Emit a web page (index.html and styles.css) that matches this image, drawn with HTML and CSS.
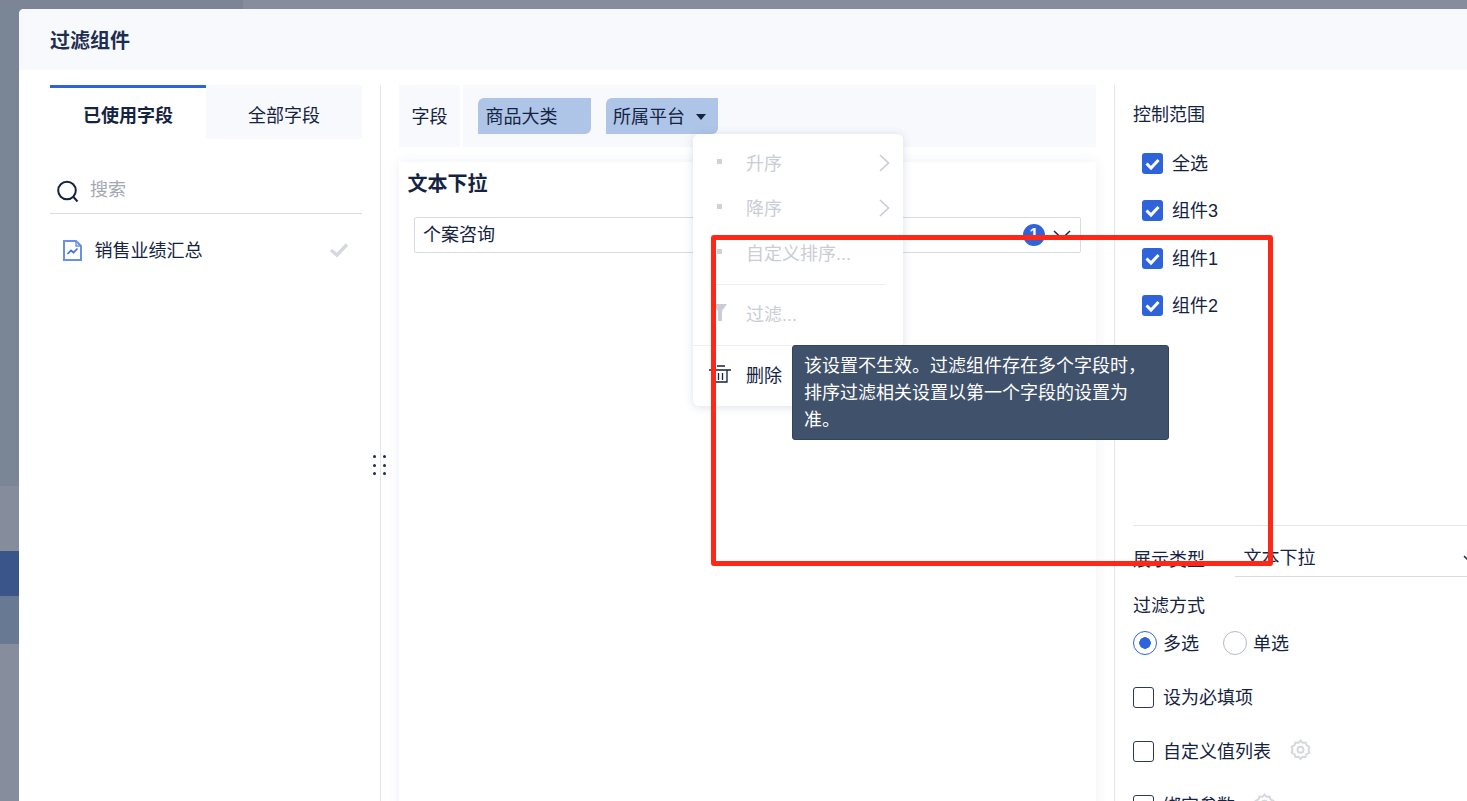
FILE: index.html
```html
<!DOCTYPE html>
<html lang="zh">
<head>
<meta charset="utf-8">
<title>过滤组件</title>
<link rel="stylesheet" href="styles.css">
</head>
<body>
<div class="page">
  <div class="top-strip"><div class="top-dark"></div></div>
  <div class="row">
    <div class="side-strip">
      <div class="seg seg-a"></div>
      <div class="seg seg-b"></div>
      <div class="seg seg-c"></div>
      <div class="seg seg-d"></div>
    </div>
    <div class="modal">
      <div class="modal-head">过滤组件</div>
      <div class="modal-body">
        <section class="left">
          <div class="tabs">
            <div class="tab tab-on">已使用字段</div>
            <div class="tab">全部字段</div>
          </div>
          <div class="search">
            <svg class="search-icon" width="22" height="23" viewBox="0 0 22 23"><circle cx="10" cy="10.5" r="8.8" fill="none" stroke="#14233f" stroke-width="2"/><path d="M16.5 17l4 4.5" stroke="#14233f" stroke-width="2" fill="none"/></svg>
            <span class="search-text">搜索</span>
          </div>
          <div class="ds-item">
            <svg class="ds-icon" width="19" height="21" viewBox="0 0 19 21"><path d="M1 1h12l5 5v14H1z" fill="#fff" stroke="#6a90e6" stroke-width="2"/><path d="M13 1v5h5" fill="none" stroke="#6a90e6" stroke-width="1.4"/><path d="M4.5 14l3.500-3.500 2.500 2 4-4" fill="none" stroke="#3f6fdc" stroke-width="1.700"/></svg>
            <span class="ds-name">销售业绩汇总</span>
            <svg class="ds-check" width="20" height="16" viewBox="0 0 20 16"><path d="M2 8l6 5L18 2.500" fill="none" stroke="#d5d8df" stroke-width="3.500"/></svg>
          </div>
        </section>
        <div class="splitter">
          <div class="grip"><i></i><i></i><i></i><i></i><i></i><i></i></div>
        </div>
        <section class="middle">
          <div class="field-bar">
            <div class="field-label">字段</div>
            <div class="pills">
              <div class="pill pill-first">商品大类</div>
              <div class="pill pill-second">所属平台<span class="caret"></span></div>
            </div>
          </div>
          <div class="card">
            <div class="card-title">文本下拉</div>
            <div class="select">
              <span class="select-text">个案咨询</span>
              <span class="badge">1</span>
              <svg class="select-chev" width="18" height="10" viewBox="0 0 18 10"><path d="M1 1l8 7.500L17 1" fill="none" stroke="#14233f" stroke-width="1.500"/></svg>
            </div>
          </div>
        </section>
        <div class="divider"></div>
        <section class="right">
          <div class="label">控制范围</div>
          <div class="checks">
            <div class="check-row"><svg class="cb" width="21" height="21" viewBox="0 0 21 21"><rect width="21" height="21" rx="3" fill="#2e63d9"/><path d="M4.500 10.500l4.500 4.500 7.500-8" fill="none" stroke="#fff" stroke-width="3"/></svg><span class="cb-text">全选</span></div>
            <div class="check-row"><svg class="cb" width="21" height="21" viewBox="0 0 21 21"><rect width="21" height="21" rx="3" fill="#2e63d9"/><path d="M4.500 10.500l4.500 4.500 7.500-8" fill="none" stroke="#fff" stroke-width="3"/></svg><span class="cb-text">组件3</span></div>
            <div class="check-row"><svg class="cb" width="21" height="21" viewBox="0 0 21 21"><rect width="21" height="21" rx="3" fill="#2e63d9"/><path d="M4.500 10.500l4.500 4.500 7.500-8" fill="none" stroke="#fff" stroke-width="3"/></svg><span class="cb-text">组件1</span></div>
            <div class="check-row"><svg class="cb" width="21" height="21" viewBox="0 0 21 21"><rect width="21" height="21" rx="3" fill="#2e63d9"/><path d="M4.500 10.500l4.500 4.500 7.500-8" fill="none" stroke="#fff" stroke-width="3"/></svg><span class="cb-text">组件2</span></div>
          </div>
          <div class="rule"></div>
          <div class="type-row">
            <span class="type-label">展示类型</span>
            <div class="type-select">文本下拉<svg class="type-chev" width="12" height="8" viewBox="0 0 12 8"><path d="M1 1l5 5 5-5" fill="none" stroke="#14233f" stroke-width="1.500"/></svg></div>
          </div>
          <div class="label filter-label">过滤方式</div>
          <div class="radios">
            <span class="radio radio-on"></span><span class="radio-text">多选</span>
            <span class="radio"></span><span class="radio-text">单选</span>
          </div>
          <div class="opt opt-1"><span class="box"></span><span class="opt-text">设为必填项</span></div>
          <div class="opt opt-2"><span class="box"></span><span class="opt-text">自定义值列表</span>
            <svg class="gear" width="21" height="22" viewBox="0 0 21 22"><path d="M10.500 1.500l2 2.300 3-.2 1.100 2.800 2.700 1.400-.7 3 .7 3-2.700 1.400-1.100 2.800-3-.2-2 2.300-2-2.300-3 .2-1.100-2.800L1.700 13.800l.7-3-.7-3 2.700-1.400 1.100-2.800 3 .2z" fill="none" stroke="#d5d8df" stroke-width="2"/><circle cx="10.500" cy="10.800" r="3" fill="none" stroke="#d5d8df" stroke-width="2"/></svg>
          </div>
          <div class="opt opt-3"><span class="box"></span><span class="opt-text">绑定参数</span>
            <svg class="gear" width="21" height="22" viewBox="0 0 21 22"><path d="M10.500 1.500l2 2.300 3-.2 1.100 2.800 2.700 1.400-.7 3 .7 3-2.700 1.400-1.100 2.800-3-.2-2 2.300-2-2.300-3 .2-1.100-2.800L1.700 13.800l.7-3-.7-3 2.700-1.400 1.100-2.800 3 .2z" fill="none" stroke="#d5d8df" stroke-width="2"/><circle cx="10.500" cy="10.800" r="3" fill="none" stroke="#d5d8df" stroke-width="2"/></svg>
          </div>
        </section>
      </div>
    </div>
  </div>

  <div class="menu">
    <div class="mi mi-off"><span class="mi-ico"><i class="dot"></i></span><span class="mi-text">升序</span><svg class="mi-arrow" width="11" height="18" viewBox="0 0 11 18"><path d="M1 1l8.500 8L1 17" fill="none" stroke="#c9cdd5" stroke-width="1.700"/></svg></div>
    <div class="mi mi-off"><span class="mi-ico"><i class="dot"></i></span><span class="mi-text">降序</span><svg class="mi-arrow" width="11" height="18" viewBox="0 0 11 18"><path d="M1 1l8.500 8L1 17" fill="none" stroke="#c9cdd5" stroke-width="1.700"/></svg></div>
    <div class="mi mi-off"><span class="mi-ico"><i class="dot"></i></span><span class="mi-text">自定义排序...</span></div>
    <div class="mi-sep mi-sep-short"></div>
    <div class="mi mi-off"><span class="mi-ico"><svg width="14" height="17" viewBox="0 0 14 17"><path d="M0 0h14L9 7v10H5V7z" fill="#c9cdd5"/></svg></span><span class="mi-text">过滤...</span></div>
    <div class="mi-sep mi-sep-last"></div>
    <div class="mi"><span class="mi-ico"><svg width="22" height="18" viewBox="0 0 22 18"><path d="M0 5h22M8 1h8M5 5v12h13V5M9.500 8v7M13.500 8v7" fill="none" stroke="#14233f" stroke-width="1.300"/></svg></span><span class="mi-text">删除</span></div>
  </div>

  <div class="tooltip">该设置不生效。过滤组件存在多个字段时，排序过滤相关设置以第一个字段的设置为准。</div>
  <div class="red-box"></div>
</div>
</body>
</html>
```

FILE: styles.css
```css
* { box-sizing: border-box; }
html, body { margin: 0; height: 801px; overflow: hidden; }
body {
  background: #868e9e;
  color: #14233f;
  font-family: "Liberation Sans", "Noto Sans CJK SC", sans-serif;
  font-size: 18px;
}
.page { position: relative; width: 1467px; height: 801px; overflow: hidden; }
.top-strip { height: 9px; background: #868e9e; }
.top-dark { width: 243px; height: 9px; background: #7b8596; }
.row { display: flex; height: 792px; }
.side-strip { width: 19px; flex: none; display: flex; flex-direction: column; }
.seg-a { height: 477px; background: #7a8595; }
.seg-b { height: 65px; background: #858d9d; }
.seg-c { height: 45px; background: #3a5589; }
.seg-d { height: 48px; background: #677993; }

.modal { width: 1500px; flex: none; background: #fff; border-radius: 5px 0 0 0; overflow: hidden; }
.modal-head {
  height: 61px;
  background: #f8f9fd;
  padding-left: 31px;
  font-size: 20px;
  font-weight: 700;
  line-height: 65px;
  color: #1d2f50;
}
.modal-body { display: flex; padding-top: 15px; height: 731px; }

.left { width: 312px; margin-left: 31px; flex: none; }
.tabs { display: flex; height: 54px; }
.tab {
  width: 156px;
  background: #f8f9fd;
  text-align: center;
  line-height: 62px;
}
.tab-on { background: #fff; border-top: 3px solid #2e63d9; font-weight: 700; line-height: 56px; }
.search {
  display: flex;
  align-items: center;
  height: 48px;
  margin-top: 27px;
  padding-left: 7px;
  border-bottom: 1px solid #d9dbe3;
}
.search-icon { margin-top: 4px; }
.search-text { margin-left: 11px; color: #a3a8b3; margin-bottom: 3px; }
.ds-item { display: flex; align-items: center; height: 72px; padding: 0 13px; }
.ds-icon { flex: none; }
.ds-name { margin: 0 0 2px 12.500px; flex: 1; }
.ds-check { flex: none; }

.splitter {
  position: relative;
  flex: none;
  border-left: 1px solid #e4e6ee;
  margin-left: 18px;
  width: 19px;
  margin-right: 18px;
}
.grip {
  position: absolute;
  left: -8px;
  top: 370px;
  width: 13px;
  display: grid;
  grid-template-columns: 3px 3px;
  justify-content: space-between;
  row-gap: 5.500px;
}
.grip i { width: 3px; height: 3px; border-radius: 50%; background: #1a2a50; }

.middle { width: 697px; flex: none; margin-left: -18px; }
.field-bar { display: flex; height: 62px; background: #f8f9fd; }
.field-label {
  width: 61px;
  flex: none;
  text-align: center;
  line-height: 64px;
}
.pills {
  flex: 1;
  display: flex;
  gap: 15px;
  border-left: 3px solid #fff;
  padding: 13px 0 0 15px;
}
.pill {
  height: 36px;
  background: #afc5e8;
  border-radius: 6px 0 6px 0;
  line-height: 38px;
}
.pill-first { width: 113px; padding-left: 7.500px; }
.pill-second { width: 112px; padding: 2px 0 0 7px; display: flex; align-items: center; }
.caret {
  width: 0; height: 0;
  margin-left: 11px;
  border-left: 5px solid transparent;
  border-right: 5px solid transparent;
  border-top: 6px solid #14233f;
}
.card {
  margin-top: 15px;
  height: 700px;
  background: #fff;
  box-shadow: 0 0 12px rgba(40, 60, 110, .08);
  padding: 0 15px;
}
.card-title {
  margin-left: -6.500px;
  font-size: 20px;
  font-weight: 700;
  line-height: 44px;
  height: 55px;
}
.select {
  display: flex;
  align-items: center;
  height: 36px;
  border: 1px solid #d8dbe3;
  border-radius: 2px;
  padding: 0 9px 0 8px;
}
.select-text { flex: 1; margin-bottom: 4px; }
.badge {
  width: 22px; height: 22px;
  border-radius: 50%;
  background: #2e63d9;
  color: #fff;
  font-size: 16px;
  font-weight: 700;
  line-height: 22px;
  text-align: center;
}
.select-chev { margin-left: 8px; }

.divider { width: 1px; flex: none; margin-left: 18px; background: #e4e6ee; }

.right { width: 352px; flex: none; margin-left: 18px; }
.label { height: 18px; line-height: 18px; margin-top: 21px; }
.checks { margin-top: 29px; padding-left: 9px; display: flex; flex-direction: column; }
.check-row { display: flex; align-items: center; gap: 9px; height: 21px; margin-bottom: 26.400px; }
.cb { flex: none; }
.cb-text { margin-bottom: 3px; }
.rule { margin-top: 182px; height: 1px; background: #e4e6ee; }
.type-row { display: flex; height: 51px; }
.type-label { width: 102px; flex: none; line-height: 18px; margin-top: 25px; }
.type-select {
  position: relative;
  flex: 1;
  padding: 23px 9px 0 8.500px;
  line-height: 18px;
  border-bottom: 1px solid #d9dbe3;
}
.type-chev { position: absolute; left: 228px; top: 29px; }
.filter-label { margin-top: 20px; }
.radios { display: flex; align-items: center; height: 24px; margin-top: 16px; }
.radio {
  width: 24px; height: 24px;
  border-radius: 50%;
  border: 1px solid #b4bac6;
  background: #fff;
  flex: none;
}
.radio-on {
  border-color: #2e63d9;
  background: radial-gradient(circle, #2e63d9 0 5.500px, #fff 6px);
}
.radio-text { margin: 0 24px 2px 6px; width: 36px; }
.opt { display: flex; align-items: center; height: 21px; }
.opt-text { margin-bottom: 2px; }
.box {
  width: 21px; height: 21px;
  border: 1px solid #2a3a58;
  border-radius: 3px;
  margin-right: 9px;
  flex: none;
}
.opt-1 { margin-top: 32px; }
.opt-2 { margin-top: 33px; }
.opt-3 { margin-top: 33px; }
.gear { margin: -3px 0 0 19px; flex: none; }

.menu {
  position: absolute;
  left: 693px;
  top: 134px;
  width: 210px;
  height: 272px;
  background: #fff;
  border-radius: 6px;
  box-shadow: 0 1px 10px rgba(40, 60, 110, .16);
  padding-top: 5px;
}
.mi { position: relative; display: flex; align-items: center; height: 45px; }
.mi-off { color: #c9cdd5; }
.mi-ico { width: 53px; flex: none; display: flex; justify-content: center; }
.dot { display: block; width: 5px; height: 5px; background: #cfd2d9; }
.mi-text { flex: 1; }
.mi-arrow { position: absolute; left: 186px; top: 15px; }
.mi-sep { height: 1px; background: #eceef3; margin: 8px 0; }
.mi-sep-short { margin: 10px 18px 5px 22px; }
.mi-sep-last { margin: 10px 0 5px; }

.tooltip {
  position: absolute;
  left: 792px;
  top: 345px;
  width: 377px;
  height: 95px;
  background: #40516b;
  border: 1px solid #33435a;
  border-radius: 3px;
  color: #fff;
  padding: 6.500px 11px;
  line-height: 27px;
}
.red-box {
  position: absolute;
  left: 711px;
  top: 234.500px;
  width: 562px;
  height: 331.500px;
  border: 5px solid #ff2716;
  border-radius: 3px;
}
```
